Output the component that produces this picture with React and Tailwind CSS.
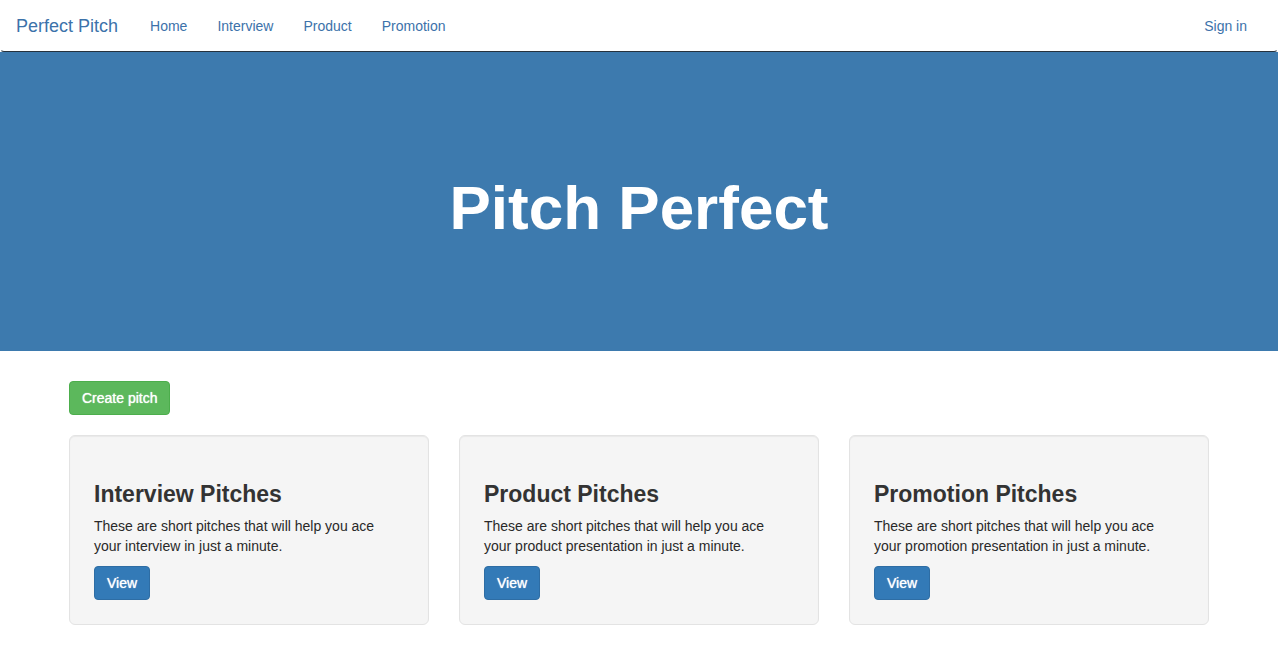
const navItems = ['Home', 'Interview', 'Product', 'Promotion'];

const cards = [
  { title: 'Interview Pitches', subject: 'interview' },
  { title: 'Product Pitches', subject: 'product presentation' },
  { title: 'Promotion Pitches', subject: 'promotion presentation' },
];

function Navbar() {
  return (
    <nav className="flex h-13 items-center rounded border border-transparent border-b-[#26323d] bg-white text-sm text-[#3c72aa]">
      <a href="#" className="px-[15px] text-lg leading-5">Perfect Pitch</a>
      <ul className="ml-0.5 flex flex-1">
        {navItems.map((item) => (
          <li key={item}>
            <a href="#" className="block px-[15px] py-[15px] leading-5">{item}</a>
          </li>
        ))}
      </ul>
      <a href="#" className="mr-[15px] block px-[15px] py-[15px] leading-5">Sign in</a>
    </nav>
  );
}

function Card({ title, subject }) {
  return (
    <section className="rounded-md border border-[#e3e3e3] bg-[#f5f5f5] p-6 shadow-[inset_0_1px_1px_rgba(0,0,0,0.05)]">
      <h2 className="mt-5 mb-2 text-[23px] leading-7 font-bold">{title}</h2>
      <p className="mb-[10px] text-[#292929]">{`These are short pitches that will help you ace your ${subject} in just a minute.`}</p>
      <button type="button" className="rounded border border-[#2e6da4] bg-[#337ab7] px-3 py-1.5 text-white [text-shadow:0_0_1px_#fff]">View</button>
    </section>
  );
}

export default function App() {
  return (
    <div className="bg-white font-['Liberation_Sans',Arial,sans-serif] text-sm leading-5 text-[#333333]">
      <Navbar />
      <header className="flex h-[299px] items-center justify-center bg-[#3d7aae] pt-3">
        <h1 className="text-[62px] leading-[70px] font-bold text-white">Pitch Perfect</h1>
      </header>
      <main className="mx-auto max-w-[1170px] px-[15px] pt-[30px] pb-5">
        <button type="button" className="rounded border border-[#4cae4c] bg-[#5cb85c] px-3 py-1.5 text-white [text-shadow:0_0_1px_#fff]">Create pitch</button>
        <div className="mt-5 grid grid-cols-3 gap-[30px]">
          {cards.map((card) => <Card key={card.title} {...card} />)}
        </div>
      </main>
    </div>
  );
}
